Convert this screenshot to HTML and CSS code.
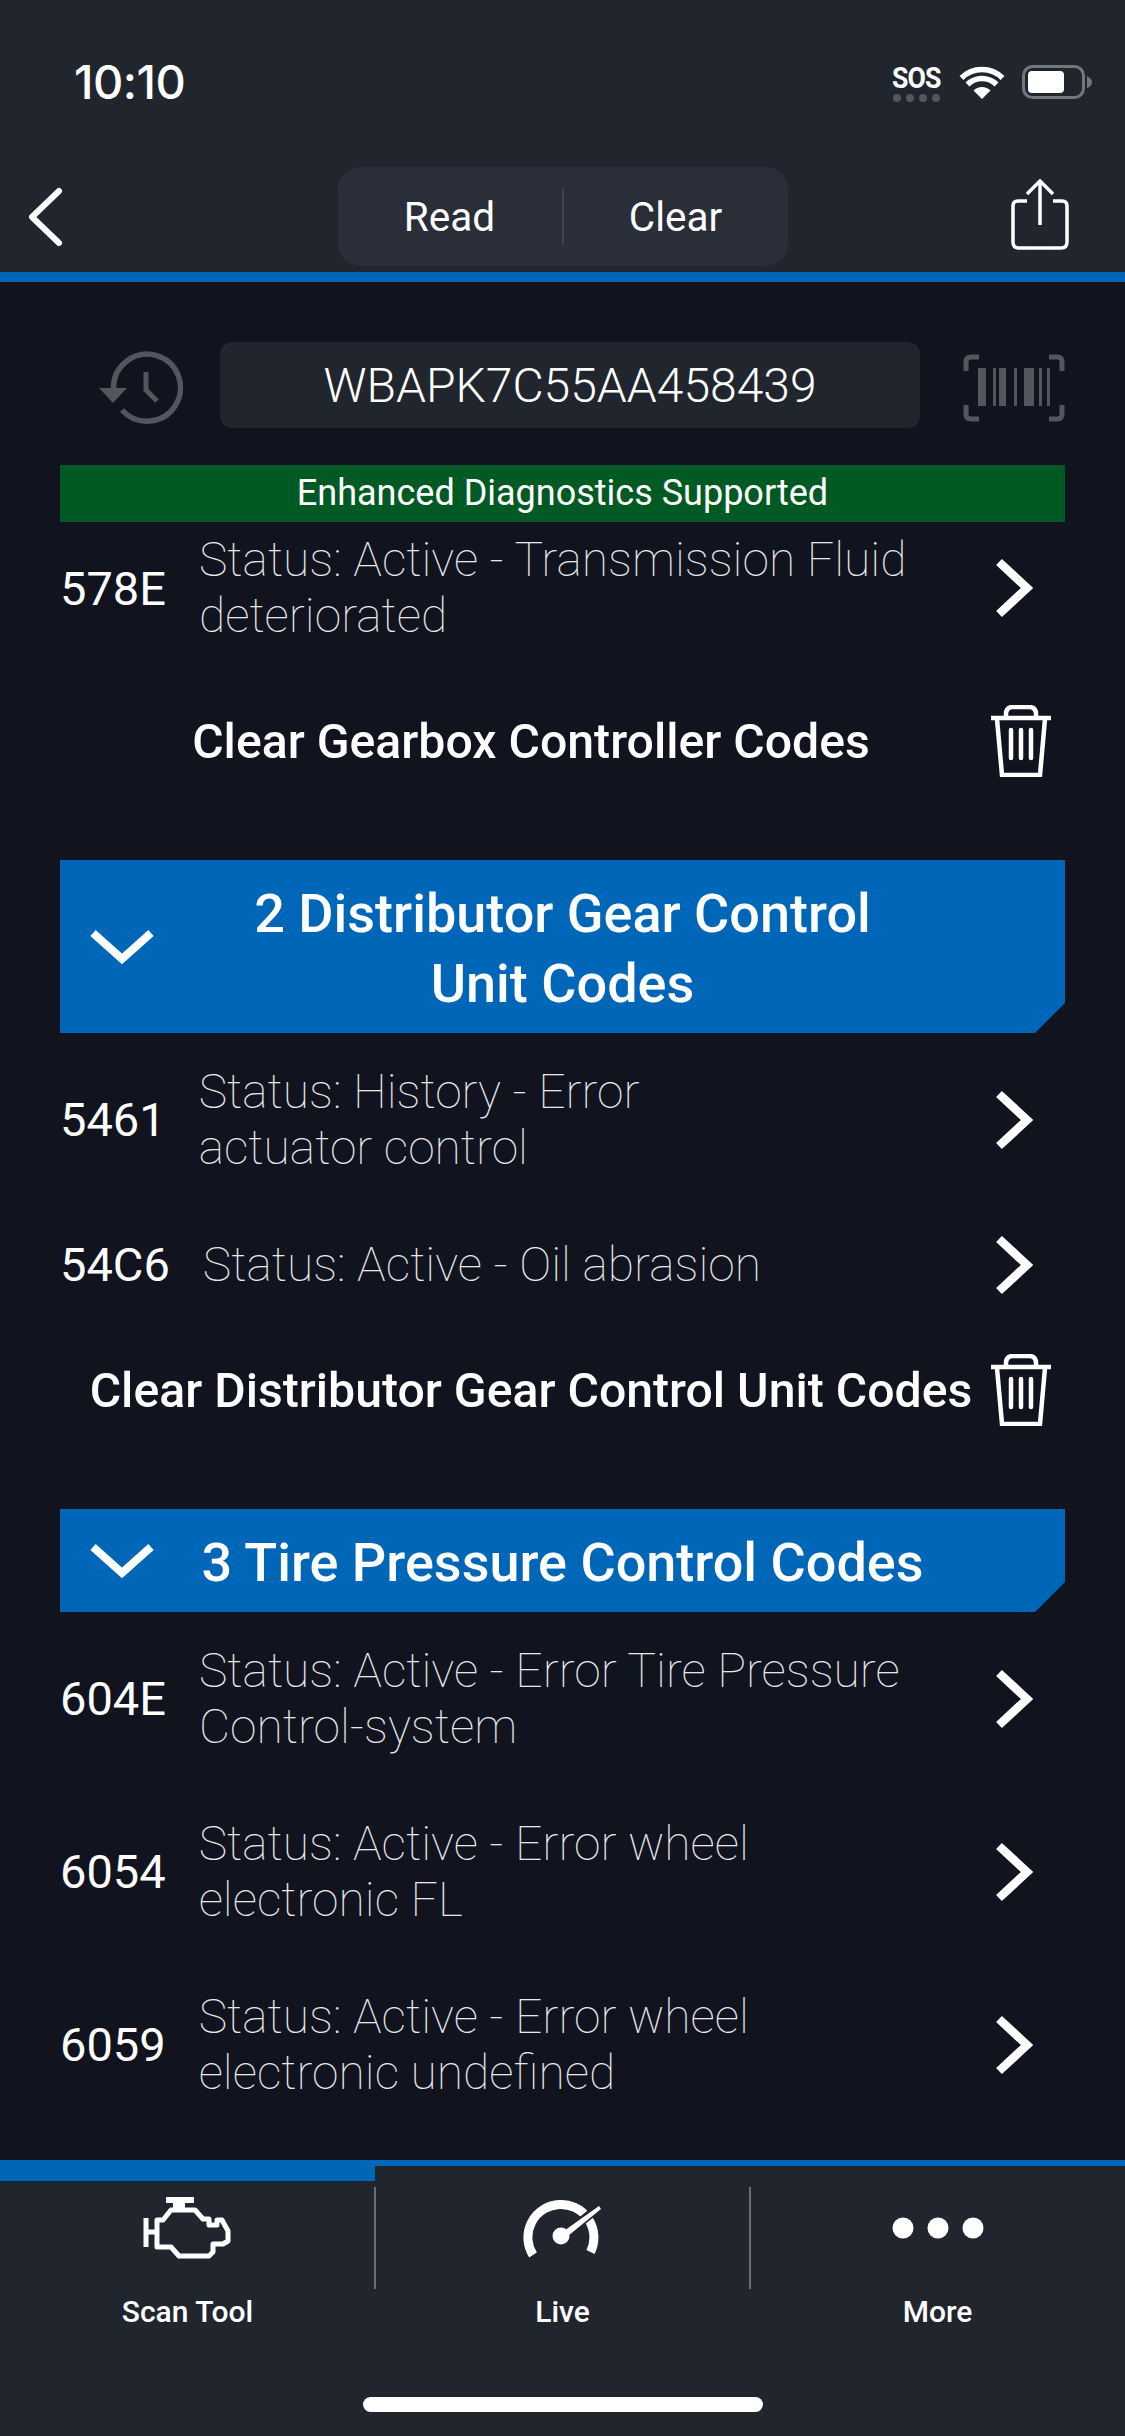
FILE: index.html
```html
<!DOCTYPE html>
<html lang="en">
<head>
<meta charset="utf-8">
<title>Scan Tool</title>
<link rel="stylesheet" href="styles.css">
</head>
<body>
<div class="phone">
  <header class="topbar">
    <div class="status">
      <span class="time">10:10</span>
      <div class="status-icons">
        <div class="sos"><span class="sos-text">SOS</span><span class="sos-dots"><i></i><i></i><i></i><i></i></span></div>
        <svg class="wifi" width="46" height="34" viewBox="0 0 46 34"><path d="M23 33 L14.5 24.5 A12 12 0 0 1 31.5 24.5 Z" fill="#fff"/><path d="M8.5 18.5 A20.5 20.5 0 0 1 37.5 18.5" fill="none" stroke="#fff" stroke-width="5.5"/><path d="M2.5 12 A29 29 0 0 1 43.5 12" fill="none" stroke="#fff" stroke-width="5.5"/></svg>
        <svg class="battery" width="70" height="36" viewBox="0 0 70 36"><rect x="1.5" y="1.5" width="60" height="31" rx="9" fill="none" stroke="#73767c" stroke-width="3"/><rect x="6" y="6" width="36" height="22" rx="4" fill="#fff"/><path d="M65 11 Q70 14 70 17 Q70 21 65 23 Z" fill="#73767c"/></svg>
      </div>
    </div>
    <nav class="navbar">
      <svg class="back" width="40" height="60" viewBox="0 0 40 60"><path d="M33 4 L6 30 L33 56" fill="none" stroke="#fff" stroke-width="6" stroke-linecap="round" stroke-linejoin="round"/></svg>
      <div class="segment">
        <span class="seg-item">Read</span>
        <span class="seg-item seg-right">Clear</span>
      </div>
      <svg class="share" width="60" height="72" viewBox="0 0 60 72"><path d="M17 22 H8 Q3 22 3 27 V63 Q3 69 9 69 H51 Q57 69 57 63 V27 Q57 22 52 22 H43" fill="none" stroke="#fff" stroke-width="3.5"/><path d="M30 46 V3 M17 15 L30 2 L43 15" fill="none" stroke="#fff" stroke-width="3.5"/></svg>
    </nav>
  </header>

  <main class="content">
    <div class="vin-row">
      <svg class="history" width="85" height="73" viewBox="0 0 85 73"><path d="M15.5 37 A33.5 33.5 0 1 1 24 59" fill="none" stroke="#53565e" stroke-width="5.5"/><path d="M1 37 H29 L15 52 Z" fill="#53565e"/><path d="M48 21 V39 L59 50" fill="none" stroke="#53565e" stroke-width="5"/></svg>
      <div class="vin">WBAPK7C55AA458439</div>
      <svg class="barcode" width="102" height="68" viewBox="0 0 102 68"><path d="M16 3 H8 Q3 3 3 8 V17 M86 3 H94 Q99 3 99 8 V17 M16 65 H8 Q3 65 3 60 V51 M86 65 H94 Q99 65 99 60 V51" fill="none" stroke="#53565e" stroke-width="5"/><path d="M15 14 h8 v38 h-8z M30 14 h3 v38 h-3z M36 14 h7 v38 h-7z M51 14 h3 v38 h-3z M61 14 h10 v38 h-10z M76 14 h3 v38 h-3z M84 14 h3 v38 h-3z" fill="#53565e"/></svg>
    </div>
    <div class="banner">Enhanced Diagnostics Supported</div>

    <div class="row row-first">
      <span class="code">578E</span>
      <span class="desc">Status: Active - Transmission Fluid<br>deteriorated</span>
      <svg class="chev" width="40" height="60" viewBox="0 0 40 60"><path d="M5 4 L33 30 L5 56" fill="none" stroke="#fff" stroke-width="8.5"/></svg>
    </div>
    <div class="clear clear-first">
      <span class="clear-text">Clear Gearbox Controller Codes</span>
      <svg class="trash" width="62" height="72" viewBox="0 0 62 72"><path d="M1 13 H61 M16 12 V9 Q16 2 23 2 H39 Q46 2 46 9 V12 M7 14 L12 70 H50 L55 14" fill="none" stroke="#fff" stroke-width="4.5"/><path d="M21 25 V53 M31 25 V53 M41 25 V53" fill="none" stroke="#fff" stroke-width="4.5" stroke-linecap="round"/></svg>
    </div>

    <div class="section tall">
      <svg class="down" width="64" height="36" viewBox="0 0 64 36"><path d="M3 4 L32 30 L61 4" fill="none" stroke="#fff" stroke-width="8"/></svg>
      <h2 class="section-title">2 Distributor Gear Control<br>Unit Codes</h2>
    </div>
    <div class="row">
      <span class="code">5461</span>
      <span class="desc">Status: History - Error<br>actuator control</span>
      <svg class="chev" width="40" height="60" viewBox="0 0 40 60"><path d="M5 4 L33 30 L5 56" fill="none" stroke="#fff" stroke-width="8.5"/></svg>
    </div>
    <div class="row row-single">
      <span class="code">54C6</span>
      <span class="desc">Status: Active - Oil abrasion</span>
      <svg class="chev" width="40" height="60" viewBox="0 0 40 60"><path d="M5 4 L33 30 L5 56" fill="none" stroke="#fff" stroke-width="8.5"/></svg>
    </div>
    <div class="clear">
      <span class="clear-text">Clear Distributor Gear Control Unit Codes</span>
      <svg class="trash" width="62" height="72" viewBox="0 0 62 72"><path d="M1 13 H61 M16 12 V9 Q16 2 23 2 H39 Q46 2 46 9 V12 M7 14 L12 70 H50 L55 14" fill="none" stroke="#fff" stroke-width="4.5"/><path d="M21 25 V53 M31 25 V53 M41 25 V53" fill="none" stroke="#fff" stroke-width="4.5" stroke-linecap="round"/></svg>
    </div>

    <div class="section short">
      <svg class="down" width="64" height="36" viewBox="0 0 64 36"><path d="M3 4 L32 30 L61 4" fill="none" stroke="#fff" stroke-width="8"/></svg>
      <h2 class="section-title">3 Tire Pressure Control Codes</h2>
    </div>
    <div class="row">
      <span class="code">604E</span>
      <span class="desc">Status: Active - Error Tire Pressure<br>Control-system</span>
      <svg class="chev" width="40" height="60" viewBox="0 0 40 60"><path d="M5 4 L33 30 L5 56" fill="none" stroke="#fff" stroke-width="8.5"/></svg>
    </div>
    <div class="row">
      <span class="code">6054</span>
      <span class="desc">Status: Active - Error wheel<br>electronic FL</span>
      <svg class="chev" width="40" height="60" viewBox="0 0 40 60"><path d="M5 4 L33 30 L5 56" fill="none" stroke="#fff" stroke-width="8.5"/></svg>
    </div>
    <div class="row">
      <span class="code">6059</span>
      <span class="desc">Status: Active - Error wheel<br>electronic undefined</span>
      <svg class="chev" width="40" height="60" viewBox="0 0 40 60"><path d="M5 4 L33 30 L5 56" fill="none" stroke="#fff" stroke-width="8.5"/></svg>
    </div>
  </main>

  <footer class="tabbar">
    <div class="tabs">
      <div class="tab tab-active">
        <svg width="90" height="66" viewBox="0 0 90 66"><path d="M23 3 H51" fill="none" stroke="#fff" stroke-width="6"/><path d="M30 4 H42 V13 H30 Z" fill="#fff"/><path d="M14 23 H20 L28 13 H52 L60 22 H66 V28 H74 V23 H79 L85 34 V44 L80 47 H70 V55 L66 59 H36 L28 50 H14 Z" fill="none" stroke="#fff" stroke-width="5" stroke-linejoin="round"/><path d="M3 21 V50 M3 35 H14" fill="none" stroke="#fff" stroke-width="5"/></svg>
        <span class="tab-label">Scan Tool</span>
      </div>
      <div class="tab">
        <svg width="80" height="66" viewBox="0 0 80 66"><path d="M10 58 A33 33 0 1 1 67.5 55" fill="none" stroke="#fff" stroke-width="9"/><path d="M50 31 L70 15" fill="none" stroke="#21252e" stroke-width="9"/><circle cx="38" cy="39" r="8.5" fill="#fff"/><path d="M38 36 L76 9 L78 12 L40 43 Z" fill="#fff"/></svg>
        <span class="tab-label">Live</span>
      </div>
      <div class="tab">
        <svg width="92" height="66" viewBox="0 0 92 66"><circle cx="11" cy="31" r="10.5" fill="#fff"/><circle cx="46" cy="31" r="10.5" fill="#fff"/><circle cx="81" cy="31" r="10.5" fill="#fff"/></svg>
        <span class="tab-label">More</span>
      </div>
    </div>
    <div class="home"></div>
  </footer>
</div>
</body>
</html>
```

FILE: styles.css
```css
* { box-sizing: border-box; }
html, body { margin: 0; padding: 0; background: #11141f; }
.phone {
  width: 1125px;
  height: 2436px;
  display: flex;
  flex-direction: column;
  overflow: hidden;
  font-family: Roboto, "Liberation Sans", sans-serif;
  color: #fff;
  background: #11141f;
}

/* top */
.topbar { height: 282px; background: #21252e; border-bottom: 10px solid #0066b8; }
.status { height: 167px; padding: 58px 33px 0 74px; display: flex; justify-content: space-between; align-items: flex-start; }
.time { font-family: Inter, Roboto, sans-serif; font-size: 47px; font-weight: 500; line-height: 48px; letter-spacing: -.5px; }
.status-icons { display: flex; align-items: center; gap: 17px; margin-top: 6px; }
.sos { display: flex; flex-direction: column; align-items: center; gap: 2px; width: 48px; margin-right: 2px; }
.sos-text { font-size: 29px; font-weight: 700; line-height: 28px; letter-spacing: -1px; transform: scaleX(.92); }
.sos-dots { display: flex; gap: 5px; }
.sos-dots i { width: 8px; height: 8px; border-radius: 50%; background: #53565e; }
.navbar { height: 105px; display: grid; grid-template-columns: 1fr auto 1fr; align-items: start; }
.back { margin: 20px 0 0 26px; }
.share { margin: 12px 55px 0 0; justify-self: end; }
.segment { width: 450px; height: 99px; border-radius: 22px; background: #2a2e38; display: flex; align-items: center; }
.seg-item { flex: 1; height: 57px; display: flex; align-items: center; justify-content: center; font-size: 40.5px; font-weight: 400; }
.seg-right { border-left: 2px solid #3d414b; }

/* content */
.content { flex: 1; padding: 0 60px; }
.vin-row { height: 183px; padding-top: 60px; display: flex; align-items: flex-start; }
.history { margin: 9px 0 0 38px; }
.vin { width: 700px; height: 86px; margin-left: 37px; border-radius: 12px; background: #21252e; display: flex; align-items: center; justify-content: center; font-size: 48px; font-weight: 300; }
.barcode { margin: 12px 0 0 43px; }
.banner { height: 57px; background: #015a24; display: flex; align-items: center; justify-content: center; font-size: 36px; font-weight: 400; padding-bottom: 2px; }

.row { height: 173px; display: flex; align-items: center; gap: 33px; padding: 0 31px 0 0; }
.row-first { height: 132px; }
.row-single { height: 117px; }
.code { font-size: 47px; font-weight: 400; }
.desc { font-size: 48px; font-weight: 100; line-height: 56px; color: #e8e9ec; }
.chev { margin-left: auto; flex: none; }
.clear { height: 134px; margin-bottom: 52px; display: flex; align-items: center; padding: 0 13px 0 12px; }
.clear-first { margin-top: 20px; }
.clear-text { flex: 1; text-align: center; font-size: 48.2px; font-weight: 500; }
.trash { flex: none; }

.section { position: relative; background: #0066b8; display: grid; grid-template-columns: 1fr auto 1fr; align-items: center; padding-left: 30px; }
.section::after { content: ""; position: absolute; right: 0; bottom: 0; border-style: solid; border-width: 0 0 30px 30px; border-color: transparent transparent #11141f transparent; }
.tall { height: 173px; }
.short { height: 103px; }
.down { grid-column: 1; }
.section-title { grid-column: 2; margin: 5px 0 0 -30px; font-size: 54px; font-weight: 500; line-height: 70px; text-align: center; }

/* tabs */
.tabbar { height: 276px; background: #21252e; border-top: 6px solid #0066b8; display: flex; flex-direction: column; }
.tabs { height: 231px; display: grid; grid-template-columns: repeat(3, 1fr); }
.tab { position: relative; display: flex; flex-direction: column; align-items: center; padding-top: 31px; }
.tab-active::before { content: ""; position: absolute; left: 0; top: 0; width: 100%; height: 15px; background: #0066b8; }
.tab + .tab::before { content: ""; position: absolute; left: -1px; top: 21px; width: 2px; height: 102px; background: #6a6d74; }
.tab-label { margin-top: 32px; font-size: 30px; font-weight: 500; line-height: 34px; }
.home { width: 400px; height: 15px; border-radius: 8px; background: #fff; margin: 0 auto; }
```
